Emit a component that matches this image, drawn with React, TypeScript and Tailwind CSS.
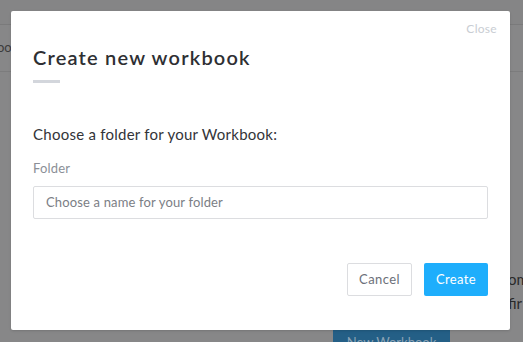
import React from 'react';

export default function App() {
  return (
    <div className="relative w-[523px] h-[342px] overflow-hidden bg-[#878788] font-['Lato',sans-serif]">
      {/* Page behind the overlay */}
      <div className="h-[25px] bg-[#858586] border-b border-[#7a7a7b]" />
      <div className="h-[47px] border-b border-[#7c7c7d] flex items-center">
        <span className="text-[13px] text-[#3c3c3c] -ml-[3px]">oo</span>
      </div>
      <div className="absolute left-[508px] top-[270px] flex flex-col gap-[6px] text-[15px] text-[#2a2a2a] leading-[18px]">
        <span>om</span>
        <span>fir</span>
      </div>
      <div className="absolute left-[333px] top-[330px] w-[117px] h-[30px] bg-[#245f86] flex justify-center pt-[3px]">
        <span className="text-[13px] text-[#8ba3b5]">New Workbook</span>
      </div>

      {/* Modal */}
      <div className="absolute left-[11px] top-[11px] w-[499px] h-[319px] bg-white rounded-[2px] shadow-sm">
        <button className="absolute right-[13px] top-[8px] text-[12px] text-[#c9cdd3] leading-[20px] tracking-[0.3px]">Close</button>
        <div className="px-[22px] pt-[33px]">
          <h1 className="text-[20px] font-semibold text-[#2e2f33] leading-[26px] tracking-[1.2px]">Create new workbook</h1>
          <div className="mt-[10px] w-[27px] h-[3px] bg-[#d3d6dc]" />
          <p className="mt-[41px] text-[15px] text-[#333438] leading-[20px] tracking-[0.25px]">Choose a folder for your Workbook:</p>
          <label className="block mt-[15px] text-[13px] text-[#8b8f97] leading-[18px] tracking-[0.2px]">Folder</label>
          <div className="mt-[9px] h-[33px] border border-[#dcdde0] rounded-[2px] flex items-center px-[12px]">
            <span className="text-[13px] text-[#7b7e85] tracking-[0.15px]">Choose a name for your folder</span>
          </div>
          <div className="mt-[44px] flex justify-end gap-[12px]">
            <button className="w-[65px] h-[33px] border border-[#dcdde0] rounded-[2px] text-[13px] text-[#6c7079] tracking-[0.4px]">Cancel</button>
            <button className="w-[64px] h-[33px] bg-[#1eaefc] rounded-[2px] text-[13px] text-white tracking-[0.4px]">Create</button>
          </div>
        </div>
      </div>
    </div>
  );
}
